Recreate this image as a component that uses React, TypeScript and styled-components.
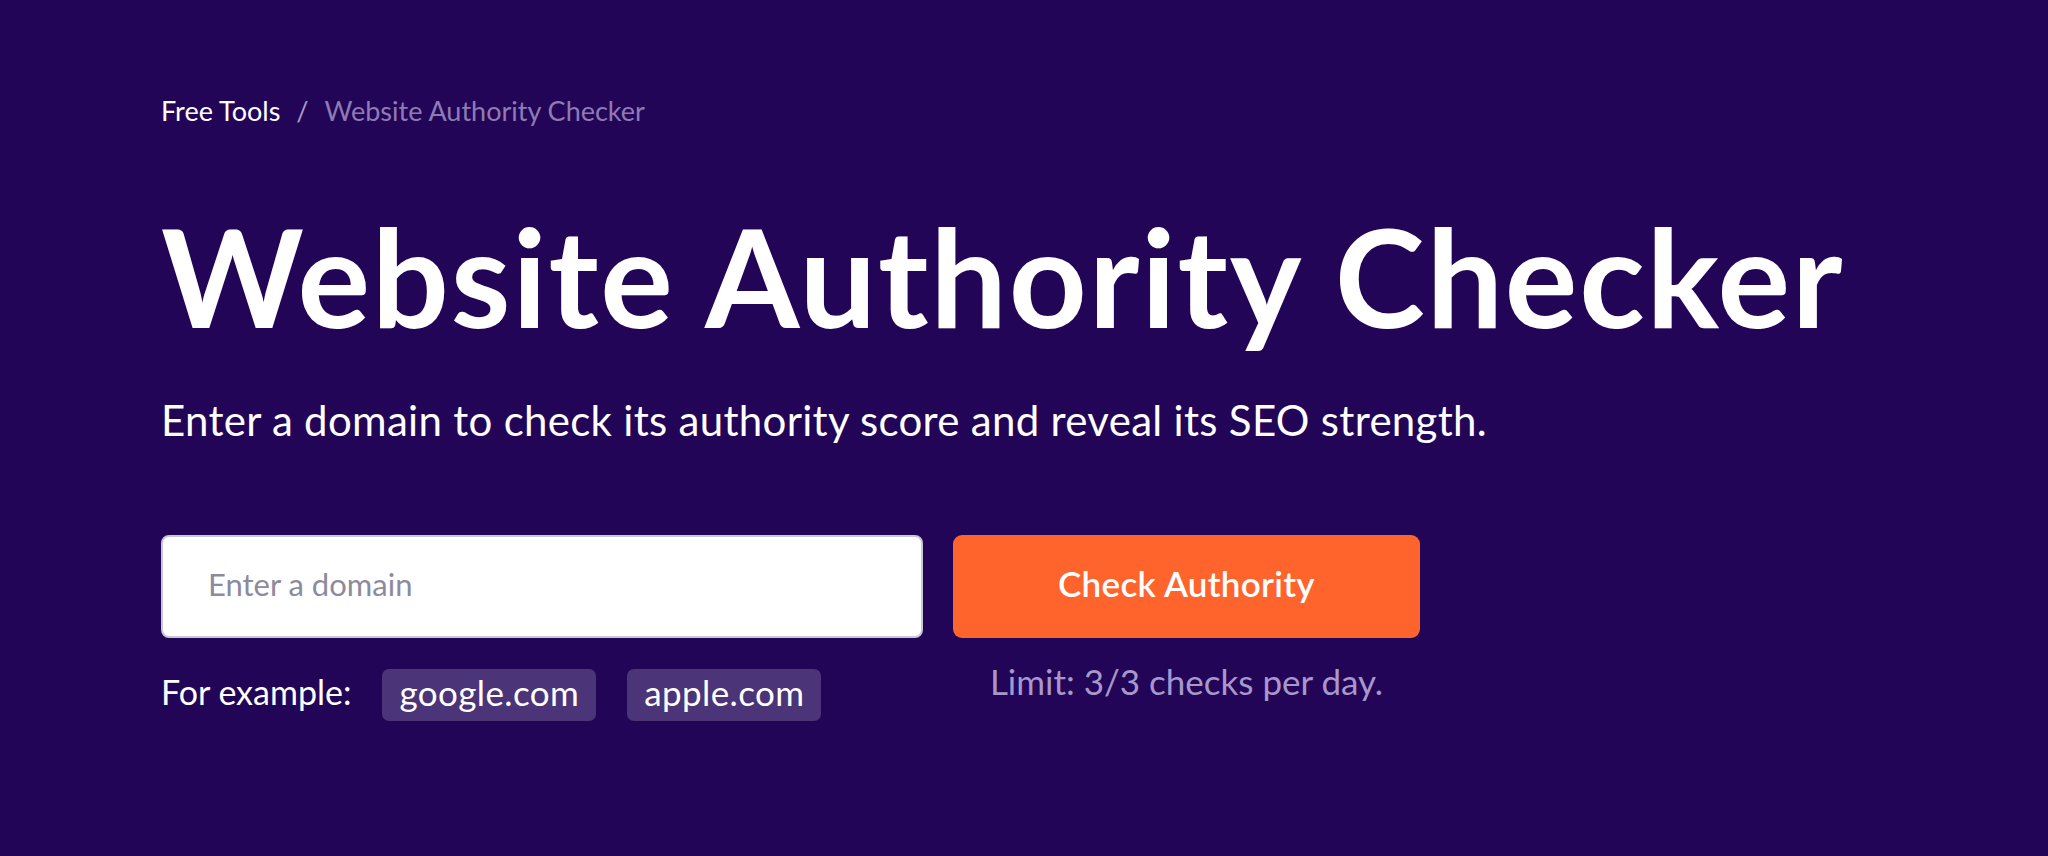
import React from "react";
import styled, { createGlobalStyle } from "styled-components";

const Global = createGlobalStyle`
  html, body {
    margin: 0;
    padding: 0;
    background: #230558;
  }
  body {
    font-family: Lato, "Noto Sans", sans-serif;
    -webkit-font-smoothing: antialiased;
  }
  * { box-sizing: border-box; }
`;

const Page = styled.main`
  min-height: 856px;
  background: #230558;
  padding: 95px 161px 0;
  color: #ffffff;
`;

const Breadcrumbs = styled.nav`
  display: flex;
  align-items: baseline;
  gap: 16px;
  font-size: 27px;
  line-height: 32px;
`;

const Crumb = styled.a<{ $current?: boolean }>`
  color: ${(p) => (p.$current ? "#8d7bb4" : "#ffffff")};
  text-decoration: none;
`;

const Slash = styled.span`
  color: #a99bc9;
`;

const Title = styled.h1`
  margin: 68px 0 0;
  font-size: 136px;
  line-height: 162px;
  font-weight: 700;
  letter-spacing: 1.75px;
`;

const Lead = styled.p`
  margin: 38px 0 0;
  font-size: 42px;
  line-height: 50px;
  font-weight: 400;
  letter-spacing: 0.3px;
`;

const Form = styled.form`
  margin-top: 90px;
  display: grid;
  grid-template-columns: 762px 467px;
  column-gap: 30px;
  row-gap: 31px;
`;

const Input = styled.input`
  height: 103px;
  border: 2px solid #c9c6d6;
  border-radius: 8px;
  background: #ffffff;
  padding: 0 0 6px 45px;
  font-family: inherit;
  font-size: 31px;
  color: #2b2b3a;
  outline: none;

  &::placeholder {
    color: #8c8a9e;
  }
`;

const Submit = styled.button`
  height: 103px;
  border: 0;
  border-radius: 9px;
  background: #ff642d;
  color: #ffffff;
  padding: 0 0 8px;
  font-family: inherit;
  font-size: 35px;
  font-weight: 600;
  letter-spacing: 0.3px;
  cursor: pointer;
`;

const Examples = styled.div`
  display: flex;
  align-items: center;
  gap: 31px;
  font-size: 34px;
`;

const ExampleLabel = styled.span`
  padding-bottom: 7px;
`;

const Chip = styled.button`
  height: 52px;
  padding: 0 17px 7px;
  border: 0;
  border-radius: 7px;
  background: #4b3478;
  color: #ffffff;
  font-family: inherit;
  font-size: 35px;
  letter-spacing: 0.4px;
  cursor: pointer;
`;

const Limit = styled.p`
  margin: -8px 0 0;
  align-self: start;
  text-align: center;
  font-size: 35px;
  color: #a797cb;
  line-height: 40px;
`;

export default function App() {
  return (
    <>
      <Global />
      <Page>
        <Breadcrumbs>
          <Crumb href="#">Free Tools</Crumb>
          <Slash>/</Slash>
          <Crumb $current>Website Authority Checker</Crumb>
        </Breadcrumbs>
        <Title>Website Authority Checker</Title>
        <Lead>Enter a domain to check its authority score and reveal its SEO strength.</Lead>
        <Form onSubmit={(e) => e.preventDefault()}>
          <Input placeholder="Enter a domain" />
          <Submit type="submit">Check Authority</Submit>
          <Examples>
            <ExampleLabel>For example:</ExampleLabel>
            <Chip type="button">google.com</Chip>
            <Chip type="button">apple.com</Chip>
          </Examples>
          <Limit>Limit: 3/3 checks per day.</Limit>
        </Form>
      </Page>
    </>
  );
}
